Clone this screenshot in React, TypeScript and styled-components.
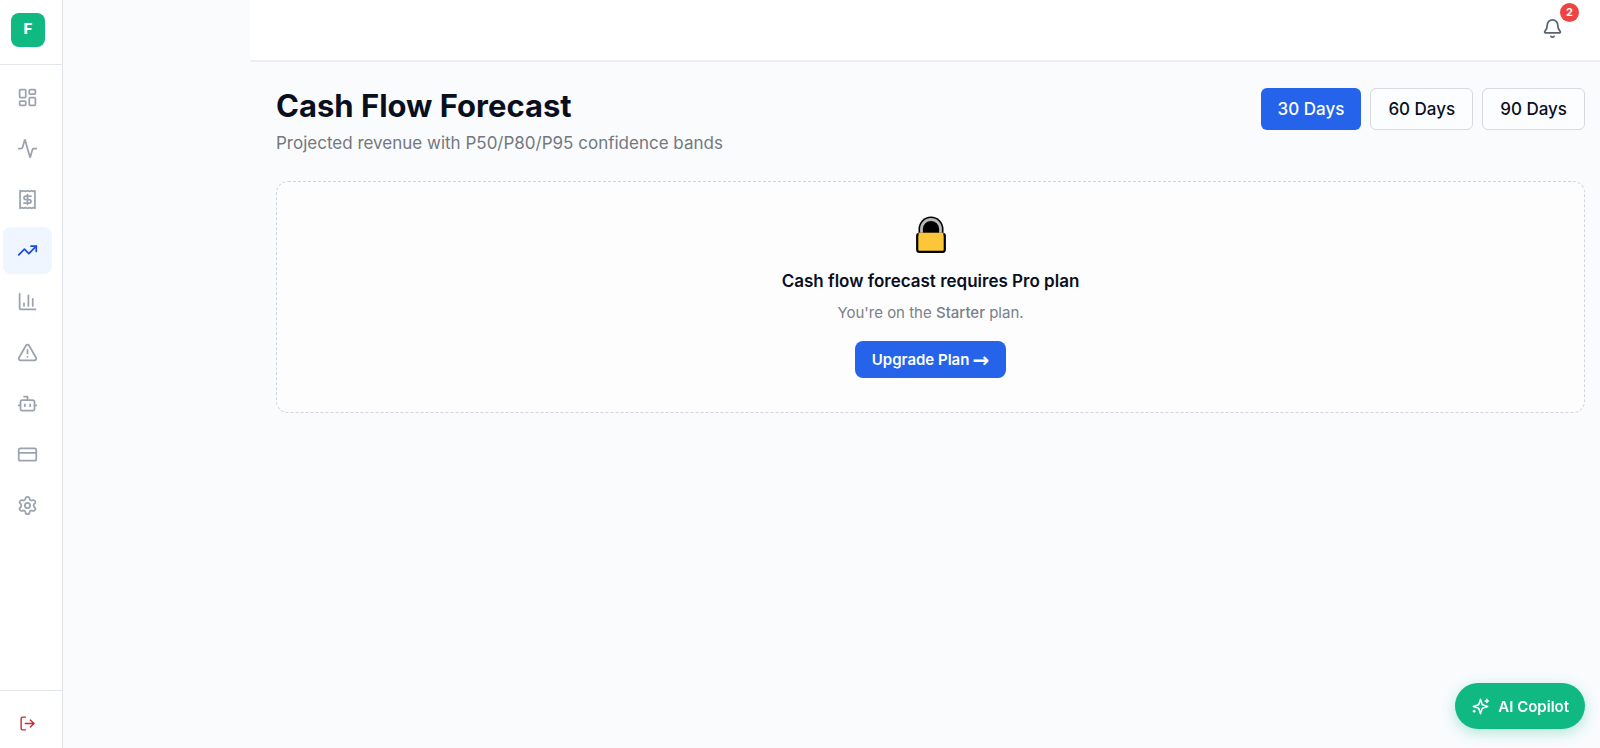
import React from 'react';
import styled, { createGlobalStyle } from 'styled-components';
import {
  Activity,
  Bell,
  Bot,
  ChartColumn,
  CreditCard,
  LayoutDashboard,
  LogOut,
  Settings,
  TrendingUp,
  TriangleAlert,
} from 'lucide-react';

const GlobalStyle = createGlobalStyle`
  *, *::before, *::after { box-sizing: border-box; }
  body {
    margin: 0;
    background: #f9fbfd;
    color: #0a0f1e;
    font-family: Inter, "Liberation Sans", sans-serif;
  }
  h1, h2, p { margin: 0; }
  button { font-family: inherit; cursor: pointer; }
`;

const Shell = styled.div`
  display: flex;
  min-height: 100vh;
`;

const Sidebar = styled.aside`
  position: sticky;
  top: 0;
  display: flex;
  flex-direction: column;
  flex: none;
  width: 63px;
  height: 100vh;
  background: #ffffff;
  border-right: 1px solid #e2e5e9;
`;

const Brand = styled.div`
  display: flex;
  height: 65px;
  padding: 13px 11px;
  border-bottom: 1px solid #e2e5e9;
`;

const Logo = styled.a`
  display: flex;
  justify-content: center;
  width: 34px;
  height: 34px;
  border-radius: 8px;
  background: #10b981;
  color: #ffffff;
  font-size: 15px;
  line-height: 32px;
  font-weight: 800;
  text-decoration: none;
`;

const Nav = styled.nav`
  display: flex;
  flex: 1;
  flex-direction: column;
  gap: 4px;
  padding: 9px 10px 9px 3px;
`;

const NavLink = styled.a<{ $active?: boolean }>`
  display: flex;
  align-items: center;
  justify-content: center;
  height: 47px;
  border-radius: 8px;
  background: ${({ $active }) => ($active ? '#eff6ff' : 'transparent')};
  color: ${({ $active }) => ($active ? '#1d4ed8' : '#9ca3af')};
`;

const SidebarFooter = styled.div`
  padding: 9px 10px 1px 3px;
  border-top: 1px solid #e2e5e9;
`;

const LogoutButton = styled.button`
  display: flex;
  align-items: center;
  justify-content: center;
  width: 100%;
  height: 47px;
  padding: 0;
  border: 0;
  background: transparent;
  color: #c92a35;
`;

const Page = styled.div`
  flex: 1;
  min-width: 0;
  margin-left: 187px;
`;

const TopBar = styled.header`
  display: flex;
  justify-content: flex-end;
  height: 62px;
  padding: 8px 28px;
  background: #ffffff;
  border-bottom: 2px solid #eceef1;
`;

const BellButton = styled.button`
  position: relative;
  display: flex;
  align-items: center;
  justify-content: center;
  width: 40px;
  height: 40px;
  padding: 0;
  border: 0;
  background: transparent;
  color: #5b6370;
`;

const Badge = styled.span`
  position: absolute;
  top: -5px;
  right: -7px;
  width: 19px;
  height: 19px;
  border-radius: 50%;
  background: #ef4444;
  color: #ffffff;
  font-size: 11px;
  line-height: 19px;
  font-weight: 700;
  text-align: center;
`;

const Main = styled.main`
  padding: 26px 15px 26px 26px;
`;

const PageHead = styled.div`
  display: flex;
  align-items: flex-start;
  justify-content: space-between;
  margin-bottom: 26px;
`;

const Title = styled.h1`
  font-size: 31px;
  line-height: 36px;
  font-weight: 700;
`;

const Subtitle = styled.p`
  margin-top: 8px;
  color: #737880;
  font-size: 17px;
  line-height: 23px;
`;

const RangeGroup = styled.div`
  display: flex;
  gap: 9px;
`;

const RangeButton = styled.button<{ $active?: boolean }>`
  height: 42px;
  padding: 0 17px;
  border: ${({ $active }) => ($active ? '0' : '1px solid #d6d9de')};
  border-radius: 6px;
  background: ${({ $active }) => ($active ? '#2563eb' : '#fcfdfe')};
  color: ${({ $active }) => ($active ? '#ffffff' : '#0a0f1e')};
  font-size: 17px;
  font-weight: 500;
`;

const LockedCard = styled.section`
  display: flex;
  flex-direction: column;
  align-items: center;
  padding: 34px;
  border: 1px dashed #d1d5db;
  border-radius: 12px;
  background: #fdfdfe;
  text-align: center;
`;

const CardTitle = styled.h2`
  margin-top: 17px;
  font-size: 17px;
  line-height: 23px;
  font-weight: 600;
`;

const CardText = styled.p`
  margin-top: 8px;
  color: #7a7f89;
  font-size: 15px;
  line-height: 23px;

  strong { font-weight: 500; }
`;

const UpgradeLink = styled.a`
  display: flex;
  align-items: center;
  gap: 3px;
  height: 37px;
  margin-top: 17px;
  padding: 0 17px;
  border-radius: 8px;
  background: #2563eb;
  color: #ffffff;
  font-size: 15px;
  font-weight: 600;
  text-decoration: none;
`;

const CopilotButton = styled.button`
  position: fixed;
  right: 15px;
  bottom: 19px;
  display: flex;
  align-items: center;
  gap: 8px;
  height: 46px;
  padding: 0 16px;
  border: 0;
  border-radius: 23px;
  background: #10b981;
  box-shadow: 0 4px 14px rgba(16, 185, 129, 0.3);
  color: #ffffff;
  font-size: 15px;
  font-weight: 600;
`;

const Arrow = styled.span`
  font-family: "DejaVu Sans", sans-serif;
  font-size: 20px;
  line-height: 20px;
`;

function InvoiceIcon({ size = 21 }: { size?: number }) {
  return (
    <svg
      width={size}
      height={size}
      viewBox="0 0 24 24"
      fill="none"
      stroke="currentColor"
      strokeWidth="2"
      strokeLinecap="round"
      strokeLinejoin="round"
      aria-hidden="true"
    >
      <path d="M3.5 2v20l2-.7 2 .7 2-.7 2.5.7 2.5-.7 2 .7 2-.7 2 .7V2l-2 .7-2-.7-2 .7L12 2l-2.500.7-2-.7-2 .7Z" />
      <path d="M16 8h-6a2 2 0 1 0 0 4h4a2 2 0 1 1 0 4H8" />
      <path d="M12 17.500V6.500" />
    </svg>
  );
}

const navItems = [
  { label: 'Dashboard', icon: LayoutDashboard },
  { label: 'Activity', icon: Activity },
  { label: 'Invoices', icon: InvoiceIcon },
  { label: 'Forecast', icon: TrendingUp, active: true },
  { label: 'Reports', icon: ChartColumn },
  { label: 'Alerts', icon: TriangleAlert },
  { label: 'Agents', icon: Bot },
  { label: 'Billing', icon: CreditCard },
  { label: 'Settings', icon: Settings },
];

const ranges = [30, 60, 90];

function PadlockIcon() {
  return (
    <svg width="30" height="37" viewBox="0 0 30 37" aria-hidden="true">
      <path d="M2.500 19V13a12.500 12.500 0 0 1 25 0V19z" fill="#000000" />
      <path d="M5.500 18V13a9.500 9.500 0 0 1 19 0V18" fill="none" stroke="#b9b9bc" strokeWidth="2.800" />
      <rect x="1.200" y="17.800" width="27.600" height="18" rx="2" fill="#fcc63a" stroke="#000000" strokeWidth="2.200" />
      <path d="M2.600 17.900h24.800" stroke="#fcc63a" strokeWidth="2.400" />
    </svg>
  );
}

function SparklesIcon() {
  return (
    <svg
      width="19"
      height="19"
      viewBox="0 0 24 24"
      fill="none"
      stroke="currentColor"
      strokeWidth="2"
      strokeLinecap="round"
      strokeLinejoin="round"
      aria-hidden="true"
    >
      <path d="m12 3-1.912 5.813a2 2 0 0 1-1.275 1.275L3 12l5.813 1.912a2 2 0 0 1 1.275 1.275L12 21l1.912-5.813a2 2 0 0 1 1.275-1.275L21 12l-5.813-1.912a2 2 0 0 1-1.275-1.275L12 3Z" />
      <path d="M20 3v4" />
      <path d="M22 5h-4" />
      <path d="M4 17v2" />
      <path d="M5 18H3" />
    </svg>
  );
}

export default function App() {
  const [days, setDays] = React.useState(30);

  return (
    <>
      <GlobalStyle />
      <Shell>
        <Sidebar>
          <Brand>
            <Logo href="#home">F</Logo>
          </Brand>
          <Nav aria-label="Main">
            {navItems.map(({ label, icon: Icon, active }) => (
              <NavLink
                key={label}
                href={`#${label.toLowerCase()}`}
                aria-label={label}
                aria-current={active ? 'page' : undefined}
                $active={active}
              >
                <Icon size={21} />
              </NavLink>
            ))}
          </Nav>
          <SidebarFooter>
            <LogoutButton type="button" aria-label="Log out">
              <LogOut size={17} />
            </LogoutButton>
          </SidebarFooter>
        </Sidebar>

        <Page>
          <TopBar>
            <BellButton type="button" aria-label="Notifications">
              <Bell size={21} />
              <Badge>2</Badge>
            </BellButton>
          </TopBar>

          <Main>
            <PageHead>
              <div>
                <Title>Cash Flow Forecast</Title>
                <Subtitle>Projected revenue with P50/P80/P95 confidence bands</Subtitle>
              </div>
              <RangeGroup>
                {ranges.map((range) => (
                  <RangeButton
                    key={range}
                    type="button"
                    aria-pressed={days === range}
                    $active={days === range}
                    onClick={() => setDays(range)}
                  >
                    {range} Days
                  </RangeButton>
                ))}
              </RangeGroup>
            </PageHead>

            <LockedCard>
              <PadlockIcon />
              <CardTitle>Cash flow forecast requires Pro plan</CardTitle>
              <CardText>
                You're on the <strong>Starter</strong> plan.
              </CardText>
              <UpgradeLink href="#billing">
                Upgrade Plan <Arrow>→</Arrow>
              </UpgradeLink>
            </LockedCard>
          </Main>
        </Page>
      </Shell>

      <CopilotButton type="button">
        <SparklesIcon />
        AI Copilot
      </CopilotButton>
    </>
  );
}
